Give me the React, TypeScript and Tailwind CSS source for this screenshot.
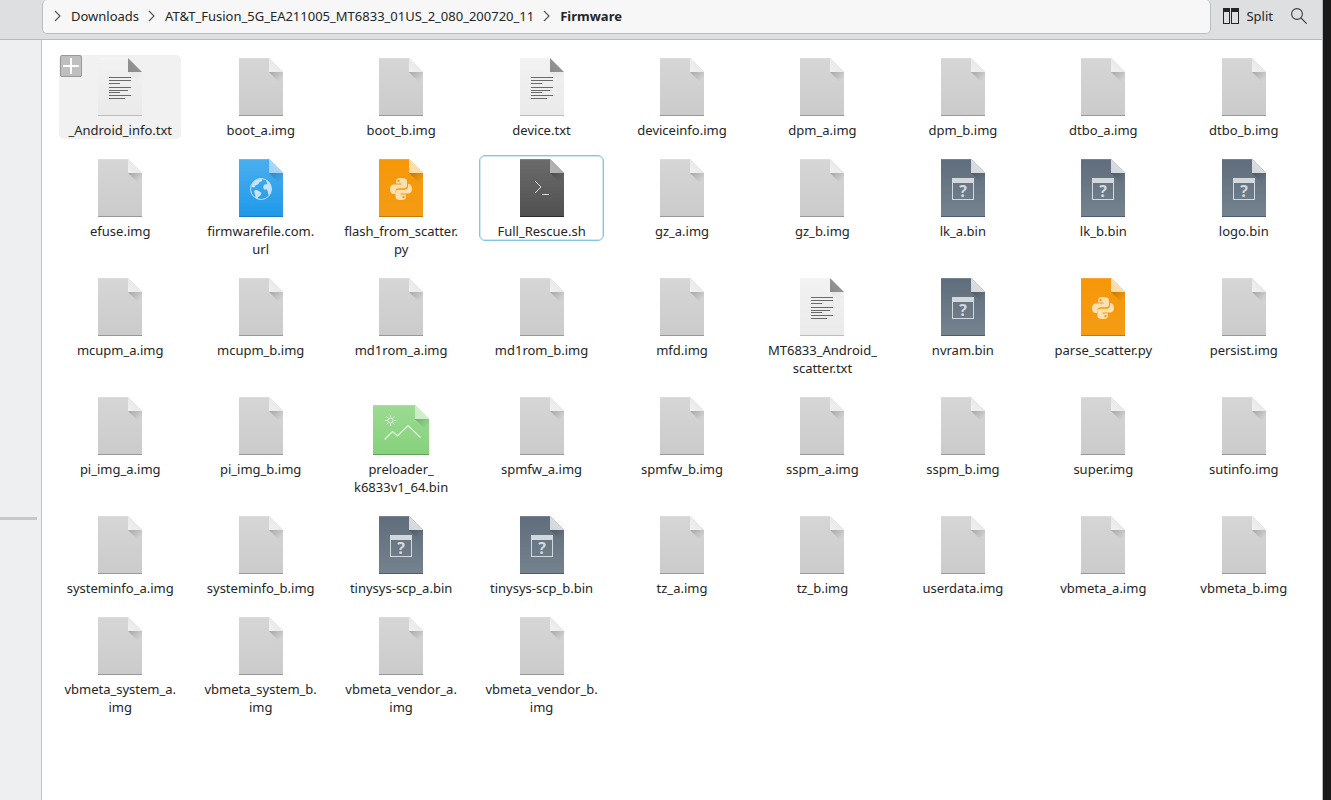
import { useState } from 'react'
import { clsx } from 'clsx'

type FileKind = 'img' | 'txt' | 'url' | 'py' | 'sh' | 'bin' | 'picture'

interface FileEntry {
  label: string
  kind: FileKind
}

// A line break in a label marks where a long name wraps
const files: FileEntry[] = [
  { label: '_Android_info.txt', kind: 'txt' },
  { label: 'boot_a.img', kind: 'img' },
  { label: 'boot_b.img', kind: 'img' },
  { label: 'device.txt', kind: 'txt' },
  { label: 'deviceinfo.img', kind: 'img' },
  { label: 'dpm_a.img', kind: 'img' },
  { label: 'dpm_b.img', kind: 'img' },
  { label: 'dtbo_a.img', kind: 'img' },
  { label: 'dtbo_b.img', kind: 'img' },
  { label: 'efuse.img', kind: 'img' },
  { label: 'firmwarefile.com.\nurl', kind: 'url' },
  { label: 'flash_from_scatter.\npy', kind: 'py' },
  { label: 'Full_Rescue.sh', kind: 'sh' },
  { label: 'gz_a.img', kind: 'img' },
  { label: 'gz_b.img', kind: 'img' },
  { label: 'lk_a.bin', kind: 'bin' },
  { label: 'lk_b.bin', kind: 'bin' },
  { label: 'logo.bin', kind: 'bin' },
  { label: 'mcupm_a.img', kind: 'img' },
  { label: 'mcupm_b.img', kind: 'img' },
  { label: 'md1rom_a.img', kind: 'img' },
  { label: 'md1rom_b.img', kind: 'img' },
  { label: 'mfd.img', kind: 'img' },
  { label: 'MT6833_Android_\nscatter.txt', kind: 'txt' },
  { label: 'nvram.bin', kind: 'bin' },
  { label: 'parse_scatter.py', kind: 'py' },
  { label: 'persist.img', kind: 'img' },
  { label: 'pi_img_a.img', kind: 'img' },
  { label: 'pi_img_b.img', kind: 'img' },
  { label: 'preloader_\nk6833v1_64.bin', kind: 'picture' },
  { label: 'spmfw_a.img', kind: 'img' },
  { label: 'spmfw_b.img', kind: 'img' },
  { label: 'sspm_a.img', kind: 'img' },
  { label: 'sspm_b.img', kind: 'img' },
  { label: 'super.img', kind: 'img' },
  { label: 'sutinfo.img', kind: 'img' },
  { label: 'systeminfo_a.img', kind: 'img' },
  { label: 'systeminfo_b.img', kind: 'img' },
  { label: 'tinysys-scp_a.bin', kind: 'bin' },
  { label: 'tinysys-scp_b.bin', kind: 'bin' },
  { label: 'tz_a.img', kind: 'img' },
  { label: 'tz_b.img', kind: 'img' },
  { label: 'userdata.img', kind: 'img' },
  { label: 'vbmeta_a.img', kind: 'img' },
  { label: 'vbmeta_b.img', kind: 'img' },
  { label: 'vbmeta_system_a.\nimg', kind: 'img' },
  { label: 'vbmeta_system_b.\nimg', kind: 'img' },
  { label: 'vbmeta_vendor_a.\nimg', kind: 'img' },
  { label: 'vbmeta_vendor_b.\nimg', kind: 'img' },
]

const palette: Record<FileKind, { top: string; bottom: string; edge: string; fold: string; foldEnd: string }> = {
  img: { top: '#d6d6d6', bottom: '#cbcbcb', edge: '#989898', fold: '#f1f1f1', foldEnd: '#e2e2e2' },
  txt: { top: '#f2f2f2', bottom: '#eaeaea', edge: '#bcbcbc', fold: '#8b8b8b', foldEnd: '#999999' },
  url: { top: '#4aaeee', bottom: '#1f99e9', edge: '#1a7fc2', fold: '#9fd0f3', foldEnd: '#b5dcf7' },
  py: { top: '#f69708', bottom: '#f49c14', edge: '#c17908', fold: '#fbd9a2', foldEnd: '#fde4bd' },
  sh: { top: '#6b6b6b', bottom: '#505050', edge: '#2f2b2b', fold: '#b5b5b5', foldEnd: '#a9a9a9' },
  bin: { top: '#5f6d7c', bottom: '#75838f', edge: '#4a5c75', fold: '#d3d6da', foldEnd: '#e0e3e6' },
  picture: { top: '#9bdb92', bottom: '#86d17b', edge: '#5ea455', fold: '#c9ebc4', foldEnd: '#d6f0d2' },
}

const textLines = [
  [19, 22],
  [22, 22],
  [25, 11],
  [29, 22],
  [32, 19],
  [34, 11],
  [37, 22],
  [40, 16],
]

function Emblem({ kind }: { kind: FileKind }) {
  switch (kind) {
    case 'txt':
      return (
        <g fill="#6a6a6a">
          {textLines.map(([y, width]) => (
            <rect key={y} x="11" y={y} width={width} height="1" />
          ))}
        </g>
      )
    case 'url':
      return (
        <g fill="#c5e4fa">
          <circle cx="22" cy="30" r="10.5" fill="none" stroke="#c5e4fa" />
          <path d="M13 25.5 L16 21.5 L21 19.5 L23.5 20.5 L22.5 22.5 L20.5 23 L19.5 25 L16.5 26.5 L15.5 28.5 L12.5 28 Z" />
          <path d="M15 32 L17 30.8 L20 32 L22.5 34 L21.5 36.5 L19 38 L18.5 40 L16.5 38.5 L16 35.5 Z" />
          <path d="M27 22 L29.5 22.5 L32 27 L32.3 31 L31 35 L29.5 36 L28.8 33 L28 30.5 L25 30.5 L24 28 L25.5 25.5 L28.5 25 Z" />
        </g>
      )
    case 'py':
      return (
        <g fill="#fde0b0">
          <path
            fillRule="evenodd"
            d="M22 19 C18.5 19 17 20 17 22 V24.5 H22.5 V25.5 H15 C12.5 25.5 11 27.5 11 30 C11 33 12.5 35 14.5 35 H16.5 V32.5 C16.5 30.5 18 29.3 20 29.3 H25 C27 29.3 28 28 28 26.3 V22 C28 20 26 19 22 19 Z M18.5 21 H20.5 V23 H18.5 Z"
          />
          <path
            fillRule="evenodd"
            d="M22 41 C25.5 41 27 40 27 38 V35.5 H21.5 V34.5 H29 C31.5 34.5 33 32.5 33 30 C33 27 31.5 25 29.5 25 H29 V27.5 C29 29.5 27.5 30.7 25.5 30.7 H19.5 C17.5 30.7 16.5 32 16.5 33.7 V38 C16.5 40 18 41 22 41 Z M23.5 37 H25.5 V39 H23.5 Z"
          />
        </g>
      )
    case 'sh':
      return (
        <g fill="none" stroke="#e0e0e0">
          <path d="M15 22 L21 28 L15 34" />
          <path d="M22 35.5 H29" />
        </g>
      )
    case 'bin':
      return (
        <>
          <path fill="#d3d8dd" fillRule="evenodd" d="M11 19 H33 V41 H11 Z M12 24 V40 H32 V24 Z" />
          <text x="22" y="38" textAnchor="middle" className="fill-[#d3d8dd] font-['Noto_Sans',sans-serif] text-[16px] font-bold">
            ?
          </text>
        </>
      )
    case 'picture':
      return (
        <g fill="none" stroke="#e4f6e2">
          <circle cx="17.5" cy="15.5" r="2.5" />
          <path d="M17.5 10 V12 M17.5 19 V21 M12 15.5 H14 M21 15.5 H23 M13.6 11.6 L15 13 M20 18 L21.4 19.4 M13.6 19.4 L15 18 M20 13 L21.4 11.6" />
          <path strokeWidth="1.2" d="M11.5 34.5 L19.5 26.5 L24.5 31 L35 20.5 L47.5 32.5" />
        </g>
      )
    default:
      return null
  }
}

function FileIcon({ kind }: { kind: FileKind }) {
  const colors = palette[kind]
  const wide = kind === 'picture'
  const w = wide ? 56 : 44
  const h = wide ? 50 : 58
  const id = `page-${kind}`

  return (
    <svg viewBox="0 0 64 64" className="size-16 shrink-0" aria-hidden="true">
      <defs>
        <linearGradient id={id} x1="0" y1="0" x2="0" y2="1">
          <stop offset="0" stopColor={colors.top} />
          <stop offset="1" stopColor={colors.bottom} />
        </linearGradient>
        <linearGradient id={`${id}-fold`} x1="0" y1="1" x2="1" y2="0">
          <stop offset="0" stopColor={colors.fold} />
          <stop offset="1" stopColor={colors.foldEnd} />
        </linearGradient>
        <linearGradient id={`${id}-shade`} x1="0" y1="0" x2="1" y2="1">
          <stop offset="0" stopColor="#000" stopOpacity={kind === 'txt' ? 0.05 : 0.22} />
          <stop offset="0.7" stopColor="#000" stopOpacity="0" />
        </linearGradient>
      </defs>
      <g transform={wide ? 'translate(4 11)' : 'translate(10 3)'}>
        <path d={`M0 0 H${w - 14} L${w} 14 V${h} H0 Z`} fill={`url(#${id})`} />
        <rect width={w - 14} height="1" fill="#fff" opacity="0.15" />
        <rect y={h - 1} width={w} height="1" fill={colors.edge} />
        <path d={`M${w - 14} 14 H${w} V28 Z`} fill={`url(#${id}-shade)`} />
        <path d={`M${w - 14} 0 L${w} 14 H${w - 14} Z`} fill={`url(#${id}-fold)`} />
        <Emblem kind={kind} />
      </g>
    </svg>
  )
}

function Chevron() {
  return (
    <svg viewBox="0 0 8 12" className="h-3 w-2 shrink-0" fill="none" stroke="#55585b" strokeWidth="1.2" aria-hidden="true">
      <path d="M1 1 L6 6 L1 11" />
    </svg>
  )
}

function Toolbar() {
  return (
    <header className="flex h-10 items-start border-b border-[#b9babc] bg-[#dedfe1] pl-[42px]">
      <nav
        aria-label="Location"
        className="flex h-[34px] min-w-0 flex-1 items-center gap-[9px] rounded-[5px] border border-t-0 border-[#bcbdbf] bg-[#f7f7f7] pb-px pl-[11px]"
      >
        <Chevron />
        <a href="#downloads">Downloads</a>
        <Chevron />
        <a href="#fusion">AT&amp;T_Fusion_5G_EA211005_MT6833_01US_2_080_200720_11</a>
        <Chevron />
        <a href="#firmware" aria-current="page" className="font-bold">
          Firmware
        </a>
      </nav>
      <div className="flex h-8 items-center gap-[18px] pr-[15px] pl-3">
        <button type="button" className="flex items-center gap-[7px]">
          <svg viewBox="0 0 16 16" className="size-4" fill="#232629" aria-hidden="true">
            <path fillRule="evenodd" d="M0 0 H7 V16 H0 Z M1 4 V15 H6 V4 Z M8 0 H16 V16 H8 Z M9 4 V15 H15 V4 Z" />
          </svg>
          Split
        </button>
        <button type="button" aria-label="Search">
          <svg viewBox="0 0 16 16" className="size-4" fill="none" stroke="#3c3f42" strokeWidth="1.1" aria-hidden="true">
            <circle cx="6" cy="6" r="5.4" />
            <path d="M10 10 L15.7 15.7" />
          </svg>
        </button>
      </div>
    </header>
  )
}

interface FileItemProps {
  file: FileEntry
  current: boolean
  hovered: boolean
  onSelect: () => void
}

function FileItem({ file, current, hovered, onSelect }: FileItemProps) {
  return (
    <li className="relative">
      <button
        type="button"
        onClick={onSelect}
        className={clsx(
          'flex w-full flex-col items-center gap-[2px] rounded-[5px] whitespace-pre',
          hovered && 'bg-[#f1f1f1]',
          current && 'outline outline-[#84c4e6] inset-ring inset-ring-[#cfe8f6]',
        )}
      >
        <FileIcon kind={file.kind} />
        <span>{file.label}</span>
      </button>
      {hovered && (
        <button
          type="button"
          aria-label="Select item"
          className="absolute top-0 left-px flex size-[22px] items-center justify-center rounded-[2px] border border-[#999999] bg-[#bfbfbf]"
        >
          <svg viewBox="0 0 16 16" className="size-4 shrink-0" fill="#fff" aria-hidden="true">
            <path d="M7 0 H9 V7 H16 V9 H9 V16 H7 V9 H0 V7 H7 Z" />
          </svg>
        </button>
      )}
    </li>
  )
}

export default function App() {
  const [currentIndex, setCurrentIndex] = useState(12)

  return (
    <div className="flex min-h-screen bg-[#191a19] pr-2 font-['Noto_Sans',sans-serif] text-[13px] leading-[18px] text-[#232629]">
      <div className="flex min-w-0 flex-1 flex-col border-r border-[#b9babc] bg-white">
        <Toolbar />
        <div className="flex flex-1">
          <aside className="w-[42px] shrink-0 border-r border-[#c3c4c6] bg-[#eeeff1] pt-[477px] pr-1">
            <hr className="h-[3px] border-0 bg-[#c6c7c8]" />
          </aside>
          <main className="min-w-0 flex-1 px-[17px] pt-[15px]">
            <ul className="grid grid-cols-9 gap-x-[18px] gap-y-[17px]">
              {files.map((file, index) => (
                <FileItem
                  key={file.label}
                  file={file}
                  hovered={index === 0}
                  current={index === currentIndex}
                  onSelect={() => setCurrentIndex(index)}
                />
              ))}
            </ul>
          </main>
        </div>
      </div>
    </div>
  )
}
